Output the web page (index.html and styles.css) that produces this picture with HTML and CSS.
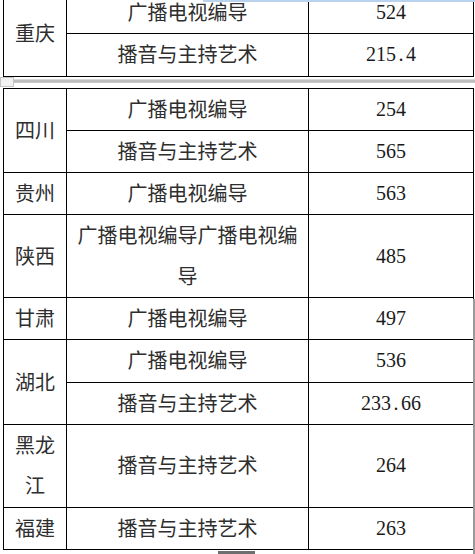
FILE: index.html
```html
<!DOCTYPE html>
<html lang="zh-CN">
<head>
<meta charset="utf-8">
<title>分数线</title>
<link rel="stylesheet" href="styles.css">
</head>
<body>
<div class="page">
  <table class="grid cut">
    <colgroup><col class="c1"><col class="c2"><col class="c3"></colgroup>
    <tr><td rowspan="2">重庆</td><td>广播电视编导</td><td class="num">524</td></tr>
    <tr><td>播音与主持艺术</td><td class="num">215<span class="pt">.</span>4</td></tr>
  </table>
  <div class="sep"><span class="handle"></span><span class="rule"></span></div>
  <table class="grid">
    <colgroup><col class="c1"><col class="c2"><col class="c3"></colgroup>
    <tr><td rowspan="2">四川</td><td>广播电视编导</td><td class="num">254</td></tr>
    <tr><td>播音与主持艺术</td><td class="num">565</td></tr>
    <tr><td>贵州</td><td>广播电视编导</td><td class="num">563</td></tr>
    <tr><td>陕西</td><td>广播电视编导广播电视编导</td><td class="num">485</td></tr>
    <tr><td>甘肃</td><td>广播电视编导</td><td class="num">497</td></tr>
    <tr><td rowspan="2">湖北</td><td>广播电视编导</td><td class="num">536</td></tr>
    <tr><td>播音与主持艺术</td><td class="num">233<span class="pt">.</span>66</td></tr>
    <tr><td>黑龙江</td><td>播音与主持艺术</td><td class="num">264</td></tr>
    <tr><td>福建</td><td>播音与主持艺术</td><td class="num">263</td></tr>
  </table>
  <div class="top-band"></div>
  <div class="right-edge"></div>
  <div class="bottom-tab"></div>
</div>
</body>
</html>
```
FILE: styles.css
```css
html, body {
  margin: 0;
  padding: 0;
  background: #fff;
}
.page {
  position: relative;
  width: 475px;
  height: 554px;
  overflow: hidden;
}
.grid {
  margin-left: 3px;
  width: 470px;
  border-collapse: collapse;
  table-layout: fixed;
  font-family: "Noto Sans CJK SC", "Noto Sans", sans-serif;
  font-size: 20px;
  color: #2e2e2e;
}
.c1 { width: 63px; }
.c2 { width: 242px; }
.c3 { width: 165px; }
.grid td {
  border: 1px solid #000;
  padding: 0 7px 1px;
  line-height: 40.3px;
  text-align: center;
  vertical-align: middle;
}
.grid td.num {
  font-family: "Liberation Serif", "Times New Roman", serif;
  font-size: 20px;
  color: #1a1a1a;
}
.pt {
  margin: 0 2.5px;
}
.cut {
  margin-top: -9px;
}
.sep {
  position: relative;
  height: 11px;
  padding-top: 2px;
  box-sizing: border-box;
}
.rule {
  display: block;
  height: 4px;
  background: linear-gradient(#e4e4e4, #b4b4b4 50%, #d0d0d0);
}
.handle {
  position: absolute;
  left: 0;
  top: 0;
  width: 12px;
  height: 8px;
  border: 1px solid #c4c4c4;
  background: #f2f2f2;
}
.top-band {
  position: absolute;
  left: 203px;
  top: 0;
  width: 272px;
  height: 2px;
  background: #b9d2ee;
}
.right-edge {
  position: absolute;
  left: 473px;
  top: 299px;
  width: 2px;
  height: 255px;
  background: #9a9a9a;
}
.bottom-tab {
  position: absolute;
  left: 218px;
  top: 551px;
  width: 37px;
  height: 3px;
  background: #6e6e6e;
}
```
